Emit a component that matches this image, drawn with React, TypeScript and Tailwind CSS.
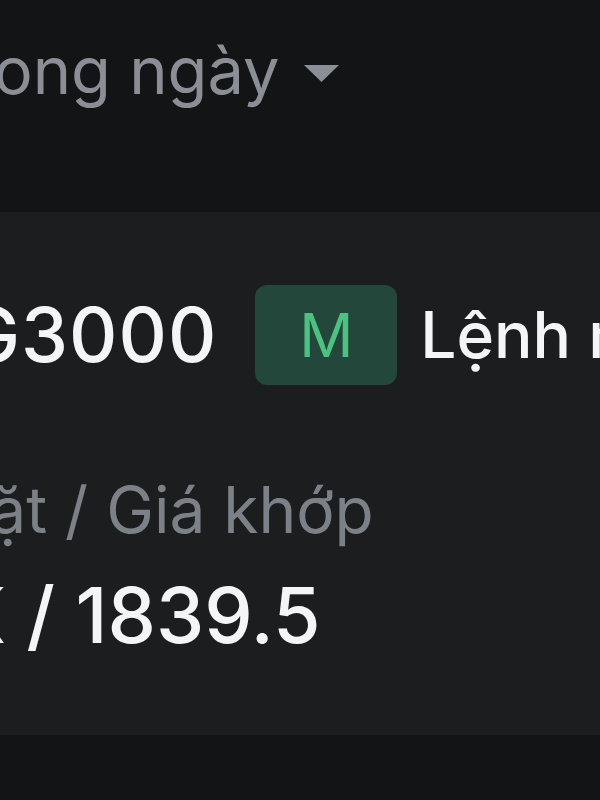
export default function App() {
  return (
    <div
      className="h-[800px] w-[600px] overflow-hidden bg-[#131416]"
      style={{ fontFamily: "Inter, 'Noto Sans', sans-serif" }}
    >
      {/* period selector */}
      <div className="flex h-[212px] items-start pt-[31px]">
        <div className="-ml-[68px] flex items-center gap-[24px] whitespace-nowrap text-[65px] leading-[80px] text-[#8b8e94]">
          <span>Trong ngày</span>
          <svg width="35" height="18" viewBox="0 0 35 18" className="mt-[6px]">
            <path d="M0 0 H35 L17.5 17 Z" fill="#8b8e94" />
          </svg>
        </div>
      </div>

      {/* order card */}
      <div className="flex h-[523px] flex-col bg-[#1c1d1f] pt-[73px]">
        <div className="flex items-center whitespace-nowrap">
          <span className="-ml-[36px] text-[75px] font-medium leading-[100px] tracking-[1px] text-[#f4f5f6]">G3000</span>
          <span className="ml-[38px] flex h-[100px] w-[142px] shrink-0 items-center justify-center rounded-[12px] bg-[#23473a] text-[60px] text-[#4cc181]">
            M
          </span>
          <span className="ml-[23px] text-[64px] font-medium text-[#f4f5f6]">Lệnh mua</span>
        </div>

        <div className="mt-[90px] -ml-[56px] whitespace-nowrap text-[64px] leading-[70px] text-[#7c8087]">
          Đặt / Giá khớp
        </div>
        <div className="mt-[30px] -ml-[47px] whitespace-nowrap text-[77px] font-medium leading-[80px] text-[#f4f5f6]">
          K / 1839.5
        </div>
      </div>
    </div>
  );
}
